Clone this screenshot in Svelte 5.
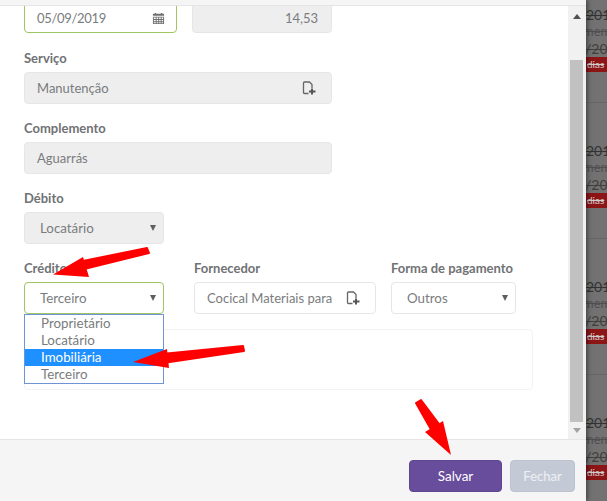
<script>
  const options = ['Proprietário', 'Locatário', 'Imobiliária', 'Terceiro'];
  const rows = [0, 1, 2, 3];
</script>

<div class="page">
  <div class="modal">
    <div class="top"></div>
    <div class="body">
      <div class="scroll">
        <div class="content">
          <div class="row first">
            <div class="field input focus w153">
              <span class="when">05/09/2019</span>
              <svg class="cal" viewBox="0 0 14 14" width="13" height="13">
                <path fill="#6f6f6f" d="M1 2h2V1h1.5v1h5V1H11v1h2v2H1z" />
                <path fill="#6f6f6f" fill-rule="evenodd" d="M1 5h12v8H1zM2 6v1.5h2V6zm3 0v1.5h1.7V6zm2.7 0v1.5h1.7V6zm2.7 0v1.5H12V6zM2 8.500V10h2V8.500zm3 0V10h1.700V8.500zm2.700 0V10h1.700V8.500zm2.700 0V10H12V8.500zM2 11v1h2v-1zm3 0v1h1.700v-1zm2.700 0v1h1.700v-1zm2.700 0v1H12v-1z" />
              </svg>
            </div>
            <div class="field input disabled w140 right"><span>14,53</span></div>
          </div>

          <div class="group">
            <label>Serviço</label>
            <div class="field input disabled w308">
              <span>Manutenção</span>
              <svg class="doc" viewBox="0 0 14 14" width="14" height="14">
                <path fill="none" stroke="#666" stroke-width="1.300" d="M6.500 12.500H2.500Q1.500 12.500 1.500 11.500V2Q1.500 1 2.500 1H7.500L10 3.500V7" />
                <path fill="none" stroke="#555" stroke-width="2" d="M10 7.500v6M7 10.500h6.500" />
              </svg>
            </div>
          </div>

          <div class="group">
            <label>Complemento</label>
            <div class="field input disabled w308"><span>Aguarrás</span></div>
          </div>

          <div class="group">
            <label>Débito</label>
            <div class="field select disabled w140"><span>Locatário</span><i class="caret"></i></div>
          </div>

          <div class="group credit">
            <div class="col">
              <label>Crédito</label>
              <div class="field select focus w140"><span>Terceiro</span><i class="caret"></i></div>
              <ul class="dropdown">
                {#each options as o}
                  <li class:sel={o === 'Imobiliária'}>{o}</li>
                {/each}
              </ul>
            </div>
            <div class="col supplier">
              <label>Fornecedor</label>
              <div class="field input w182">
                <span>Cocical Materiais para</span>
                <svg class="doc" viewBox="0 0 14 14" width="14" height="14">
                  <path fill="none" stroke="#666" stroke-width="1.300" d="M6.500 12.500H2.500Q1.500 12.500 1.500 11.500V2Q1.500 1 2.500 1H7.500L10 3.500V7" />
                  <path fill="none" stroke="#555" stroke-width="2" d="M10 7.500v6M7 10.500h6.500" />
                </svg>
              </div>
            </div>
            <div class="col pay">
              <label>Forma de pagamento</label>
              <div class="field select w125"><span>Outros</span><i class="caret"></i></div>
            </div>
          </div>

          <div class="panel"></div>
        </div>
      </div>
      <div class="scrollbar">
        <i class="up"></i>
        <div class="thumb"></div>
        <i class="down"></i>
      </div>
    </div>
    <div class="footer">
      <button class="save">Salvar</button>
      <button class="close">Fechar</button>
    </div>
  </div>

  <div class="backdrop">
    {#each rows as r}
      <div class="item">
        <div class="year">2019</div>
        <div class="desc">mem</div>
        <div class="date">/20</div>
        <div class="badge">dias</div>
        <div class="sep"></div>
      </div>
    {/each}
  </div>

  <svg class="arrows" viewBox="0 0 607 501" width="607" height="501">
    <g fill="#fe0000" stroke="#fe0000" stroke-linecap="round" stroke-linejoin="round">
      <path stroke-width="2" d="M147 248 L149 253 L80 270 L78 262 Z" />
      <polygon stroke="none" points="53,274.500 83,257 89,277" />
      <path stroke-width="2" d="M243 346 L244 351 L163 363 L162 354 Z" />
      <polygon stroke="none" points="133,362 167,349 169,368" />
      <path stroke-width="2" d="M416 403 L421 400 L442 428 L433 433 Z" />
      <polygon stroke="none" points="451,455 425,432 443,421" />
    </g>
  </svg>
</div>

<style>
  :global(body) {
    margin: 0;
    background: #727272;
  }
  .page {
    position: relative;
    display: flex;
    width: 607px;
    height: 501px;
    overflow: hidden;
    font-family: Lato, "Liberation Sans", sans-serif;
    font-size: 13px;
    color: #7a7c7e;
  }
  .modal {
    width: 586px;
    height: 501px;
    display: flex;
    flex-direction: column;
    background: #fff;
    flex: none;
    position: relative;
    z-index: 1;
    box-shadow: 1px 0 5px rgba(0, 0, 0, 0.5);
  }
  .top {
    height: 5px;
    background: #f5f5f5;
    border-bottom: 1px solid #e5e5e5;
  }
  .body {
    flex: 1;
    display: flex;
    min-height: 0;
  }
  .scroll {
    flex: 1;
    overflow: hidden;
  }
  .content {
    margin-top: -7px;
    padding-left: 24px;
    position: relative;
  }
  .row {
    display: flex;
    gap: 15px;
  }
  .group {
    margin-top: 15px;
  }
  .first + .group {
    margin-top: 16px;
  }
  label {
    display: block;
    height: 18px;
    line-height: 18px;
    margin-bottom: 5px;
    font-weight: 700;
    font-size: 13px;
    color: #707274;
  }
  .field {
    box-sizing: border-box;
    height: 32px;
    border: 1px solid #e5e6e7;
    border-radius: 4px;
    display: flex;
    align-items: center;
    justify-content: space-between;
    padding: 0 12px;
    background: #fff;
    color: #7a7c7e;
  }
  .input span,
  .select span {
    white-space: nowrap;
  }
  .when {
    letter-spacing: -0.3px;
  }
  .select {
    padding: 0 7px 0 15px;
    font-size: 13.33px;
  }
  .focus {
    border-color: #9fc660;
  }
  .first .field {
    height: 34px;
    padding-top: 4px;
  }
  .disabled {
    background: #eee;
  }
  .right {
    justify-content: flex-end;
    padding-right: 13px;
  }
  .w153 { width: 153px; }
  .w140 { width: 140px; }
  .w308 { width: 308px; }
  .w182 { width: 182px; }
  .w125 { width: 125px; }
  .cal {
    flex: none;
    margin: 1px -1px 0 0;
  }
  .doc {
    flex: none;
    margin-right: 3px;
  }
  .caret {
    width: 0;
    height: 0;
    border-left: 3px solid transparent;
    border-right: 3px solid transparent;
    border-top: 6px solid #5f5f5f;
  }
  .credit {
    display: flex;
    position: relative;
  }
  .col {
    position: relative;
  }
  .supplier {
    margin-left: 30px;
  }
  .pay {
    margin-left: 15px;
  }
  .dropdown {
    position: absolute;
    left: 0;
    top: 55px;
    box-sizing: border-box;
    width: 140px;
    margin: 0;
    padding: 0;
    list-style: none;
    background: #fff;
    border: 1px solid #7093d3;
    z-index: 2;
    font-size: 13.33px;
  }
  .dropdown li {
    height: 17px;
    line-height: 17px;
    padding-left: 16px;
  }
  .dropdown li.sel {
    background: #1e90ff;
    color: #fff;
  }
  .panel {
    box-sizing: border-box;
    width: 509px;
    height: 61px;
    margin-top: 15px;
    border: 1px solid #f3f3f3;
    border-radius: 4px;
  }
  .scrollbar {
    width: 18px;
    flex: none;
    box-sizing: border-box;
    background: #f1f1f1;
    display: flex;
    flex-direction: column;
    align-items: center;
    padding: 0 3px 0 2px;
  }
  .scrollbar i {
    width: 0;
    height: 0;
    border-left: 4px solid transparent;
    border-right: 4px solid transparent;
  }
  .up {
    margin-top: 8px;
    border-bottom: 5px solid #505050;
  }
  .thumb {
    width: 13px;
    height: 362px;
    margin-top: 41px;
    background: #c1c1c1;
  }
  .down {
    margin-top: 6px;
    border-top: 5px solid #a3a3a3;
  }
  .footer {
    box-sizing: border-box;
    height: 62px;
    flex: none;
    background: #f5f5f5;
    border-top: 1px solid #e5e5e5;
    display: flex;
    justify-content: flex-end;
    gap: 8px;
    padding: 20px 11px 0 0;
  }
  button {
    box-sizing: border-box;
    height: 32px;
    border-radius: 4px;
    font-family: inherit;
    font-size: 13.5px;
    color: #fff;
    padding: 0;
  }
  .save {
    width: 93px;
    background: #674d9b;
    border: 1px solid #5f4790;
  }
  .close {
    width: 65px;
    background: #c4c9d6;
    border: 1px solid #bcc2d0;
    color: #eef0f4;
    font-size: 13px;
  }
  .backdrop {
    flex: 1;
    overflow: hidden;
    background: #727272;
  }
  .item {
    box-sizing: border-box;
    height: 136px;
    padding-top: 6px;
    white-space: nowrap;
    overflow: hidden;
  }
  .year,
  .date,
  .desc {
    text-decoration: line-through;
    line-height: 17px;
    height: 17px;
    font-size: 14px;
  }
  .year {
    color: #333;
  }
  .desc {
    color: #505050;
    font-size: 13px;
    margin-left: -3px;
  }
  .date {
    color: #404040;
    margin-left: -1px;
  }
  .badge {
    height: 15px;
    line-height: 15px;
    background: #8e1515;
    color: #cfcfcf;
    font-size: 10px;
    padding-left: 1px;
    text-decoration: line-through;
  }
  .sep {
    height: 1px;
    margin-top: 30px;
    background: #666;
  }
  .arrows {
    position: absolute;
    left: 0;
    top: 0;
    z-index: 5;
    pointer-events: none;
  }
</style>
